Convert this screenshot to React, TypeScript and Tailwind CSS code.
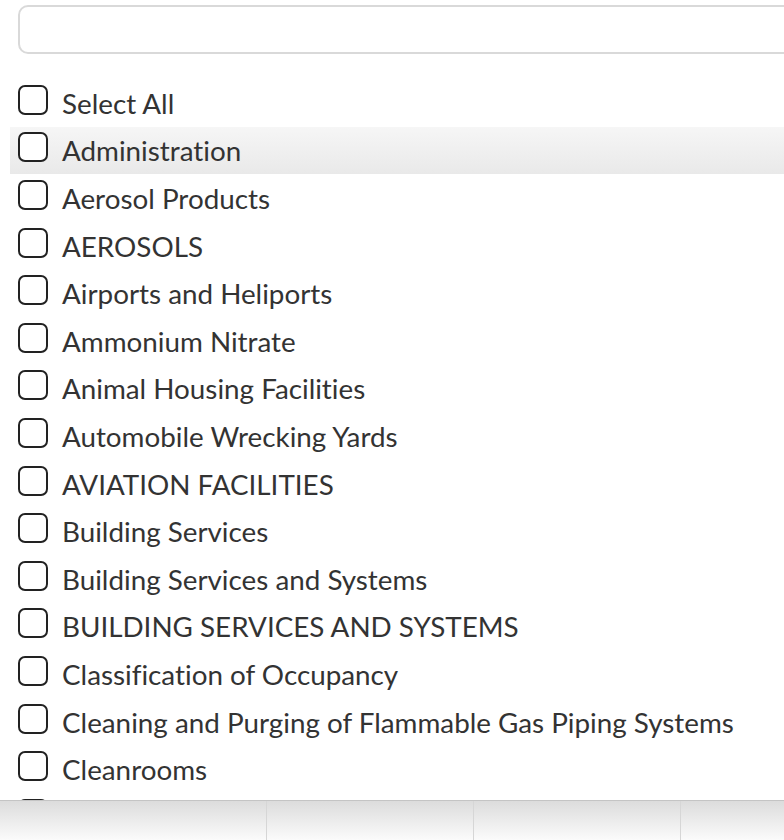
import React from "react";

const items = [
  "Select All",
  "Administration",
  "Aerosol Products",
  "AEROSOLS",
  "Airports and Heliports",
  "Ammonium Nitrate",
  "Animal Housing Facilities",
  "Automobile Wrecking Yards",
  "AVIATION FACILITIES",
  "Building Services",
  "Building Services and Systems",
  "BUILDING SERVICES AND SYSTEMS",
  "Classification of Occupancy",
  "Cleaning and Purging of Flammable Gas Piping Systems",
  "Cleanrooms",
  "",
];

export default function App() {
  return (
    <div className="w-[784px] h-[840px] overflow-hidden bg-white relative" style={{ fontFamily: "Lato, 'Open Sans', sans-serif" }}>
      <div className="h-[801px] overflow-hidden border-b border-[#c4c4c4] relative z-10 bg-white">
        <div className="pt-[5px] pl-[18px]">
          <div className="w-[820px] h-[49px] border-2 border-[#d9d9d9] rounded-[10px] bg-white" />
        </div>
        <div className="mt-[25px] pl-[10px]">
          {items.map((t, i) => (
            <div
              key={i}
              className={`h-[47.6px] flex items-center pl-[8px] ${i === 1 ? "bg-gradient-to-b from-[#f6f6f6] to-[#e9e9e9]" : ""}`}
            >
              <div className="w-[30px] h-[30px] border-2 border-[#222] rounded-[7px] bg-white shrink-0 -mt-[6px]" />
              {t && (
                <span className="ml-[14px] mt-[2px] text-[27.8px] text-[#333] whitespace-nowrap leading-none [font-variant-ligatures:none]">{t}</span>
              )}
            </div>
          ))}
        </div>
      </div>
      <div className="h-[39px] flex bg-gradient-to-b from-[#dcdcdc] to-[#fbfbfb]">
        <div className="w-[266px]" />
        <div className="w-[207px] border-l border-[#d6d6d6]" />
        <div className="w-[207px] border-l border-[#d6d6d6]" />
        <div className="flex-1 border-l border-[#d6d6d6]" />
      </div>
    </div>
  );
}
